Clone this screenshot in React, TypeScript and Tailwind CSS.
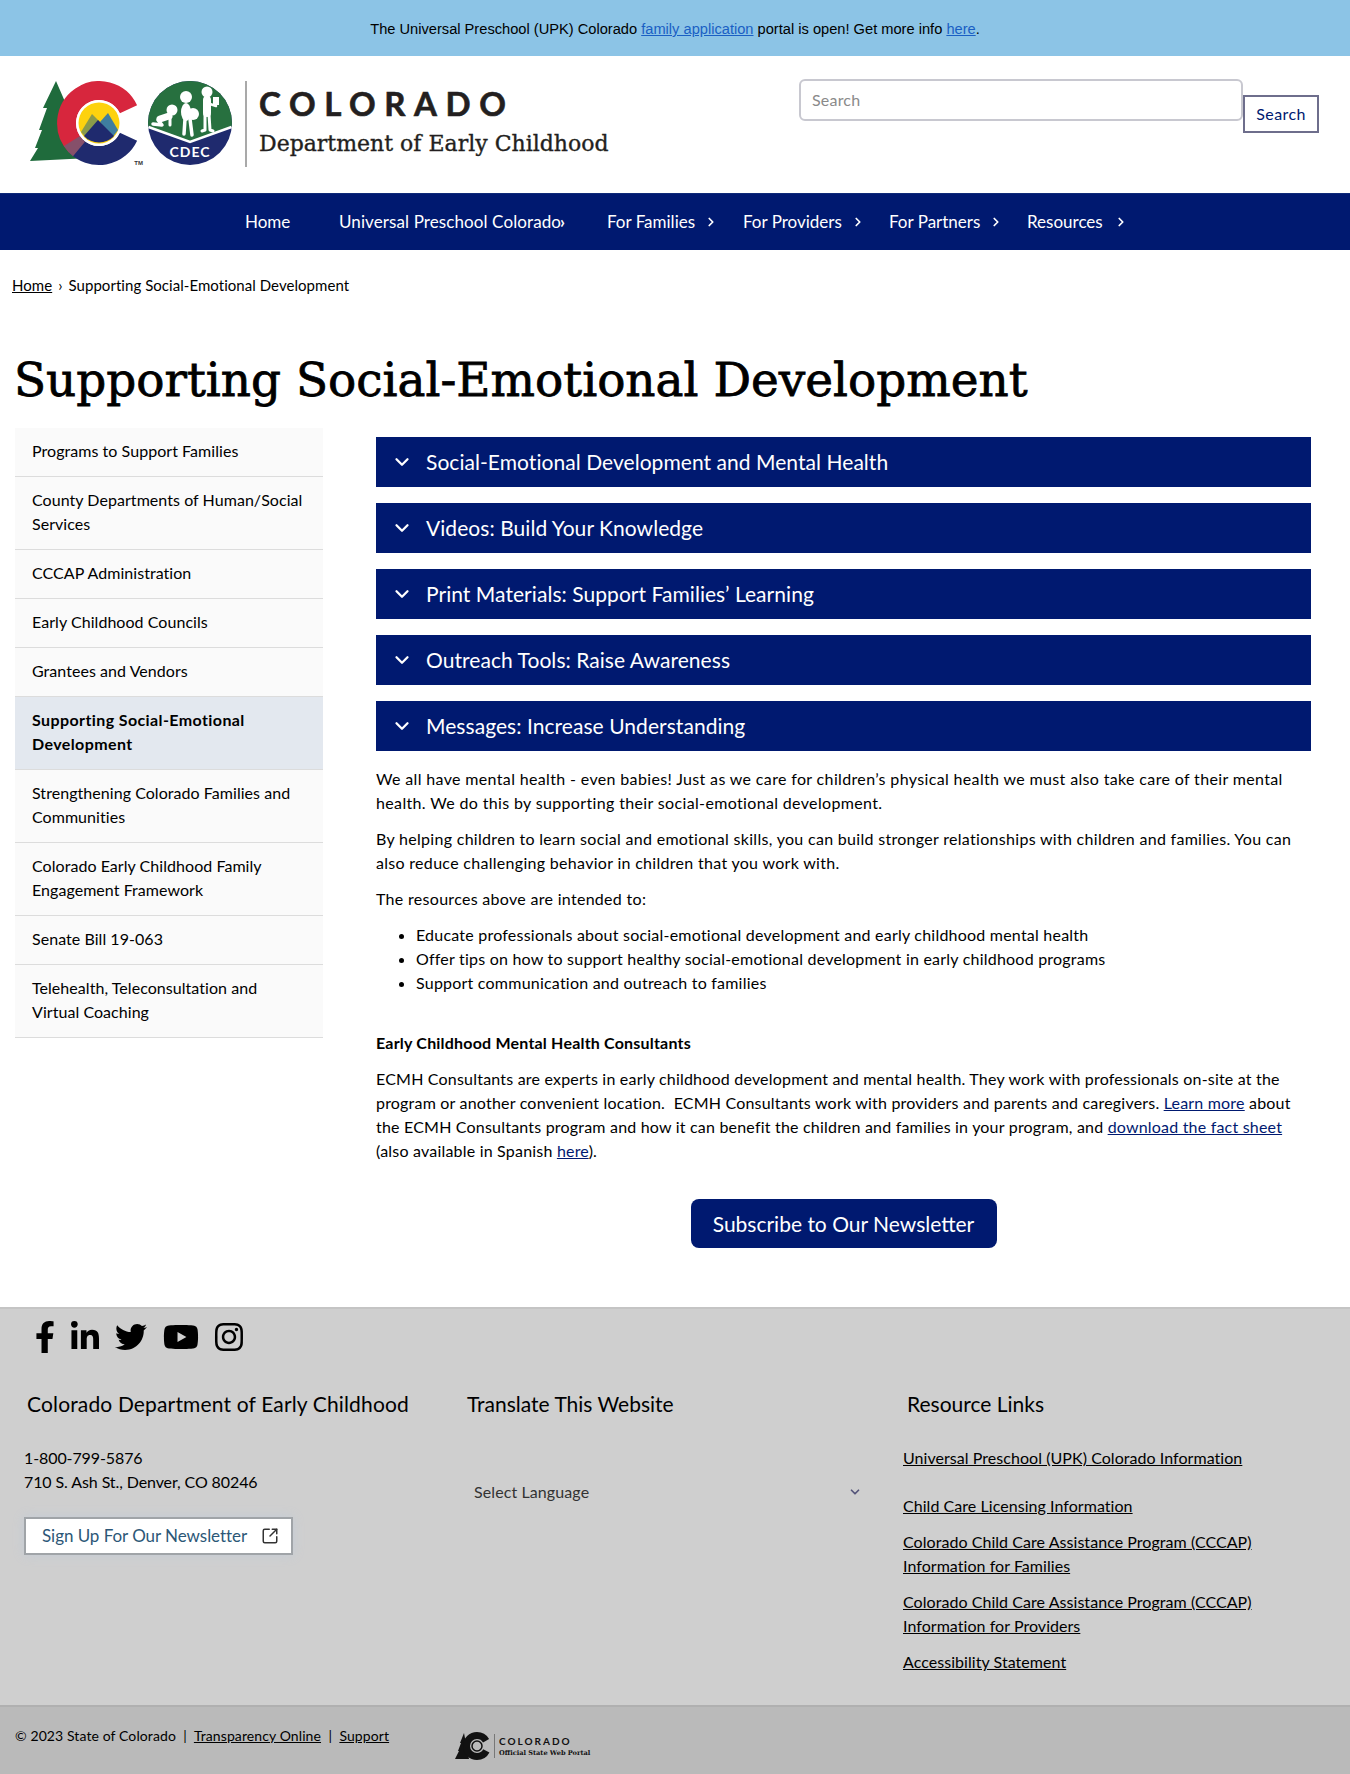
import { ChevronDown, ChevronRight, SquareArrowOutUpRight } from "lucide-react";
import { FaFacebookF, FaLinkedinIn, FaTwitter, FaYoutube, FaInstagram } from "react-icons/fa";

const side: [string, boolean?][] = [
  ["Programs to Support Families"],
  ["County Departments of Human/Social Services"],
  ["CCCAP Administration"],
  ["Early Childhood Councils"],
  ["Grantees and Vendors"],
  ["Supporting Social-Emotional Development", true],
  ["Strengthening Colorado Families and Communities"],
  ["Colorado Early Childhood Family Engagement Framework"],
  ["Senate Bill 19-063"],
  ["Telehealth, Teleconsultation and Virtual Coaching"],
];
const acc = [
  "Social-Emotional Development and Mental Health",
  "Videos: Build Your Knowledge",
  "Print Materials: Support Families’ Learning",
  "Outreach Tools: Raise Awareness",
  "Messages: Increase Understanding",
];

function Logo() {
  return (
    <svg width="217" height="86" viewBox="30 81 217 86" className="shrink-0">
      <path d="M56 81 L66 104 L62 104 L72 122 L68 122 L80 150 L90 158 L30 161 L38 148 L35 148 L42 130 L39 130 L47 108 L43 108 Z" fill="#1f6b3c" />
      <path d="M128.5 109.3 A32.5 32.5 0 1 0 76 146" fill="none" stroke="#d7263d" strokeWidth="19" />
      <path d="M76 146 A32.5 32.5 0 0 0 128.5 136.7" fill="none" stroke="#1f2a6e" strokeWidth="19" />
      <path d="M72 141 A32.5 32.5 0 0 0 79 149" fill="none" stroke="#86506a" strokeWidth="19" />
      <circle cx="99" cy="123" r="23" fill="#fff" />
      <circle cx="99" cy="123" r="20.5" fill="#fdd20e" />
      <path d="M81 132 L92 114 L100 122 L88 140 Z" fill="#8a9a4a" />
      <path d="M100 122 L108 113 L118 130 L112 138 Z" fill="#3f7ea0" />
      <path d="M84 136 L98 120 L114 136 A20.5 20.5 0 0 1 84 136 Z" fill="#1f2a6e" />
      <text x="143" y="165" fontSize="6" fontFamily="Liberation Sans" fontWeight="700" fill="#333" textAnchor="end">TM</text>
      <circle cx="190" cy="123" r="42" fill="#1f2a6e" />
      <path d="M148 123 A42 42 0 0 1 232 123 L231.5 127 L190 142 L148.5 127 Z" fill="#27703f" />
      <path d="M148.5 127 L190 142 L231.5 127" fill="none" stroke="#fff" strokeWidth="2.5" />
      <g fill="#fff" stroke="#fff" strokeLinecap="round" strokeLinejoin="round">
        <circle cx="172" cy="110" r="5.5" stroke="none" />
        <path d="M169 116 L160 119" strokeWidth="7" fill="none" />
        <path d="M170 118 L170 125" strokeWidth="3" fill="none" />
        <path d="M158 120 L162 125 L153 124" strokeWidth="3.5" fill="none" />
        <circle cx="186" cy="97" r="6" stroke="none" />
        <ellipse cx="186" cy="112" rx="5" ry="9" stroke="none" />
        <circle cx="193" cy="114" r="6" stroke="none" />
        <path d="M185 119 L184 134 M190 119 L192 135" strokeWidth="3.5" fill="none" />
        <circle cx="207" cy="92" r="5.5" stroke="none" />
        <path d="M207 100 L207 113" strokeWidth="8" fill="none" />
        <path d="M205 114 L205 130 L202 131 M209 114 L210 130 L213 131" strokeWidth="3" fill="none" />
        <path d="M210 104 L216 106" strokeWidth="2.5" fill="none" />
        <rect x="213" y="97" width="6" height="8" stroke="none" />
      </g>
      <text x="190" y="157" fontSize="14" fontFamily="Lato" fontWeight="700" fill="#fff" textAnchor="middle" letterSpacing="1">CDEC</text>
      <rect x="245.5" y="81" width="1" height="86" fill="#555" />
    </svg>
  );
}

function SmallLogo() {
  return (
    <svg width="36" height="30" viewBox="0 0 36 30" className="shrink-0">
      <path d="M9 2 L14 28 L0 28 L4 20 L3 20 L6 12 L5 12 Z" fill="#111" />
      <circle cx="22" cy="15" r="10.5" fill="none" stroke="#111" strokeWidth="7" strokeDasharray="55 12" strokeDashoffset="-5" />
      <circle cx="22" cy="15" r="5" fill="none" stroke="#111" strokeWidth="1.5" />
    </svg>
  );
}

export default function App() {
  return (
    <div className="min-h-[1774px] bg-white text-black font-['Lato',sans-serif] text-base leading-6">
      <div className="h-[56px] bg-[#8cc4e6] flex items-center justify-center font-['Liberation_Sans',sans-serif] text-[14.65px] pt-[2px]">
        <p>
          The Universal Preschool (UPK) Colorado <a className="underline text-[#1a5fc4]">family application</a> portal is open! Get more info <a className="underline text-[#1a5fc4]">here</a>.
        </p>
      </div>

      <header className="h-[137px] flex justify-between pl-[30px] pr-[30px] pt-[25px]">
        <div className="flex items-start h-[86px]">
          <Logo />
          <div className="ml-[12px]">
            <div className="font-['Lato'] font-bold text-[33px] leading-[40px] tracking-[0.26em] text-[#231f20] mt-[2px] [-webkit-text-stroke:0.6px_#231f20]">COLORADO</div>
            <div className="font-['DejaVu_Serif',serif] text-[22px] leading-[28px] text-[#231f20] mt-[7px] [-webkit-text-stroke:0.35px_#231f20]">Department of Early Childhood</div>
          </div>
        </div>
        <div className="flex items-start -mt-[2px] relative -left-[1px]">
          <div className="w-[444px] h-[42px] border-2 border-[#c8c8d0] rounded-md flex items-center px-[11px] text-[#8a8a8a] tracking-[0.2px]">Search</div>
          <button className="mt-[16px] w-[76px] h-[38px] border-2 border-[#6e6e8c] text-[#001970] bg-white tracking-[0.4px]">Search</button>
        </div>
      </header>

      <nav className="h-[57px] bg-[#001970] border-t border-[#0f2a78] flex justify-center text-white text-[17px]">
        <div className="w-[906px] flex items-center pl-[23px]">
          <a className="w-[94px]">Home</a>
          <a className="w-[268px] flex items-center tracking-[0.1px]">Universal Preschool Colorado<span className="-ml-px font-bold">›</span></a>
          <a className="w-[136px] flex items-center">For Families<ChevronRight className="ml-[9px]" size={14} strokeWidth={3} /></a>
          <a className="w-[146px] flex items-center">For Providers<ChevronRight className="ml-[9px]" size={14} strokeWidth={3} /></a>
          <a className="w-[138px] flex items-center">For Partners<ChevronRight className="ml-[9px]" size={14} strokeWidth={3} /></a>
          <a className="flex items-center">Resources<ChevronRight className="ml-[11px]" size={14} strokeWidth={3} /></a>
        </div>
      </nav>

      <div className="pt-[23px] pl-[12px] flex items-center text-[15px] tracking-[0.05px]">
        <a className="underline">Home</a>
        <span className="mx-[6px]">›</span>
        <span>Supporting Social-Emotional Development</span>
      </div>

      <h1 className="mt-[54px] pl-[14px] font-['DejaVu_Serif',serif] text-[46.9px] leading-[58px] font-normal [-webkit-text-stroke:0.8px_#000]">Supporting Social-Emotional Development</h1>

      <div className="flex pl-[15px] pr-[39px] mt-[19px]">
        <aside className="w-[308px] shrink-0 tracking-[0.05px]">
          {side.map(([t, on]) => (
            <div key={t} className={`px-[17px] pt-[11px] pb-[13px] border-b border-[#dcdcdc] ${on ? "bg-[#e3e8ef] font-bold tracking-[0.4px]" : "bg-[#fafafa]"}`}>{t}</div>
          ))}
        </aside>
        <main className="ml-[53px] flex-1 pt-[9px]">
          <div className="flex flex-col gap-[16px]">
            {acc.map((t) => (
              <div key={t} className="h-[50px] bg-[#001970] text-white text-[21px] tracking-[0.05px] flex items-center pl-[15px]">
                <ChevronDown size={22} strokeWidth={2.5} className="mr-[13px]" />
                {t}
              </div>
            ))}
          </div>
          <div className="mt-[16px] flex flex-col gap-[12px]">
            <p className="tracking-[0.35px]">We all have mental health - even babies! Just as we care for children’s physical health we must also take care of their mental health. We do this by supporting their social-emotional development.</p>
            <p className="tracking-[0.3px]">By helping children to learn social and emotional skills, you can build stronger relationships with children and families. You can also reduce challenging behavior in children that you work with.</p>
            <p className="tracking-[0.3px]">The resources above are intended to:</p>
            <ul className="list-disc pl-[40px] tracking-[0.22px]">
              <li>Educate professionals about social-emotional development and early childhood mental health</li>
              <li>Offer tips on how to support healthy social-emotional development in early childhood programs</li>
              <li>Support communication and outreach to families</li>
            </ul>
            <p className="font-bold mt-[24px] tracking-[0.2px]">Early Childhood Mental Health Consultants</p>
            <p className="tracking-[0.2px]">ECMH Consultants are experts in early childhood development and mental health. They work with professionals on-site at the program or another convenient location.&nbsp; ECMH Consultants work with providers and parents and caregivers. <a className="underline text-[#001970]">Learn more</a> about the ECMH Consultants program and how it can benefit the children and families in your program, and <a className="underline text-[#001970]">download the fact sheet</a> (also available in Spanish <a className="underline text-[#001970]">here</a>).</p>
          </div>
          <div className="flex justify-center mt-[36px]">
            <a className="h-[49px] w-[306px] rounded-lg bg-[#001970] text-white text-[21px] flex items-center justify-center">Subscribe to Our Newsletter</a>
          </div>
        </main>
      </div>

      <footer className="mt-[59px]">
        <div className="h-[398px] bg-[#cfcfcf] border-t-2 border-[#c4c4c4]">
          <div className="flex items-center h-[32px] mt-[12px] pl-[29px] gap-[14px] text-black">
            <FaFacebookF size={32} className="-mr-[6px]" />
            <FaLinkedinIn size={32} />
            <FaTwitter size={32} />
            <FaYoutube size={36} className="ml-[2px]" />
            <FaInstagram size={32} />
          </div>
          <div className="flex mt-[37px] pl-[24px]">
            <div className="w-[443px]">
              <h2 className="text-[21px] leading-[28px] pl-[3px] tracking-[0.15px]">Colorado Department of Early Childhood</h2>
              <p className="mt-[28px] tracking-[-0.1px]">1-800-799-5876<br />710 S. Ash St., Denver, CO 80246</p>
              <a className="mt-[23px] w-[269px] h-[38px] bg-white border-2 border-[#a0a4a8] shadow-[0_0_12px_#c3cbd6] flex items-center pl-[16px] text-[#2c5777] text-[17px] tracking-[-0.05px]">
                Sign Up For Our Newsletter
                <SquareArrowOutUpRight size={18} className="ml-[14px] text-[#333]" />
              </a>
            </div>
            <div className="w-[436px]">
              <h2 className="text-[21px] leading-[28px]">Translate This Website</h2>
              <div className="mt-[62px] w-[395px] pl-[7px] flex items-center justify-between text-[#333] tracking-[0.1px]">
                Select Language
                <ChevronDown size={14} strokeWidth={3} className="text-[#55557a]" />
              </div>
            </div>
            <div>
              <h2 className="text-[21px] leading-[28px] pl-[4px]">Resource Links</h2>
              <div className="mt-[28px] flex flex-col gap-[12px] w-[370px] tracking-[0.05px]">
                <a className="underline mb-[12px]">Universal Preschool (UPK) Colorado Information</a>
                <a className="underline">Child Care Licensing Information</a>
                <a className="underline">Colorado Child Care Assistance Program (CCCAP) Information for Families</a>
                <a className="underline">Colorado Child Care Assistance Program (CCCAP) Information for Providers</a>
                <a className="underline">Accessibility Statement</a>
              </div>
            </div>
          </div>
        </div>
        <div className="h-[69px] bg-[#bababa] border-t-2 border-[#b0b0b0] flex items-start pl-[15px] pt-[17px] text-[14px]">
          <span className="w-[440px] shrink-0 tracking-[0.1px]">© 2023 State of Colorado &nbsp;|&nbsp; <a className="underline">Transparency Online</a> &nbsp;|&nbsp; <a className="underline">Support</a></span>
          <div className="flex items-center mt-[7px]">
            <SmallLogo />
            <div className="border-l border-[#777] ml-[3px] pl-[4px] text-[#111]">
              <div className="font-bold text-[10px] leading-[14px] tracking-[0.2em]">COLORADO</div>
              <div className="font-['DejaVu_Serif',serif] font-bold text-[6.6px] leading-[10px]">Official State Web Portal</div>
            </div>
          </div>
        </div>
      </footer>
    </div>
  );
}
